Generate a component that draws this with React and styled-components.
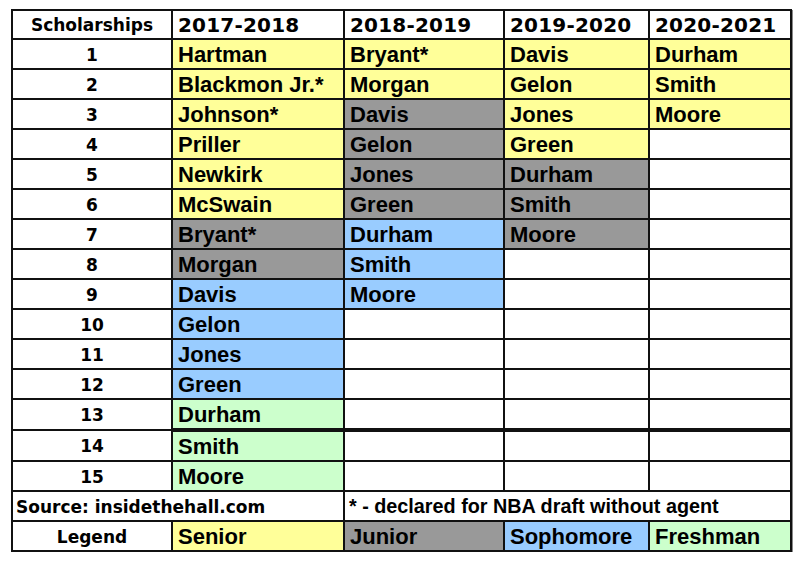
import React from 'react';
import styled, { createGlobalStyle } from 'styled-components';

const GlobalStyle = createGlobalStyle`
  body {
    margin: 0;
    background: #fff;
    font-family: "Liberation Sans", Arial, sans-serif;
  }
`;

const TONES = {
  S: '#ffff99',
  J: '#999999',
  So: '#99ccff',
  F: '#ccffcc',
};

const Page = styled.div`
  padding: 9px 0 0 11px;
`;

const Table = styled.table`
  border-collapse: collapse;
  table-layout: fixed;
  width: 779px;
  border: 2px solid #111;
  box-shadow: 1px 1px 0 #888;
`;

const Cell = styled.td`
  border: 2px solid #111;
  height: 28px;
  padding: 0 0 0 5px;
  white-space: nowrap;
  overflow: hidden;
  color: #000;
  background: ${p => (p.$tone ? TONES[p.$tone] : '#fff')};
  ${p => p.$thick && 'border-top: 4px solid #111;'}
`;

const HeadCell = styled(Cell)`
  font-family: "DejaVu Sans", Verdana, sans-serif;
  font-weight: bold;
  font-size: 20px;
  letter-spacing: 0.2px;
  padding-top: 1px;
  height: 26px;
`;

const LabelCell = styled(Cell)`
  font-family: "DejaVu Sans", Verdana, sans-serif;
  font-weight: bold;
  font-size: 17px;
  text-align: center;
  padding: 1px 0 0 0;
  height: ${p => (p.$head ? '26px' : '27px')};
`;

const NameCell = styled(Cell)`
  font-family: "Liberation Sans", Arial, sans-serif;
  font-weight: bold;
  font-size: 22px;
  padding-top: 2px;
  height: 26px;
`;

const SourceCell = styled(Cell)`
  font-family: "DejaVu Sans", Verdana, sans-serif;
  font-weight: bold;
  font-size: 17px;
  padding-left: 3px;
  padding-top: 1px;
  height: 27px;
`;

const NoteCell = styled(Cell)`
  font-family: "Liberation Sans", Arial, sans-serif;
  font-weight: bold;
  font-size: 19.8px;
  padding-left: 4px;
  padding-top: 1px;
  height: 27px;
`;

const seasons = ['2017-2018', '2018-2019', '2019-2020', '2020-2021'];

const roster = [
  [
    ['Hartman', 'S'], ['Blackmon Jr.*', 'S'], ['Johnson*', 'S'], ['Priller', 'S'],
    ['Newkirk', 'S'], ['McSwain', 'S'], ['Bryant*', 'J'], ['Morgan', 'J'],
    ['Davis', 'So'], ['Gelon', 'So'], ['Jones', 'So'], ['Green', 'So'],
    ['Durham', 'F'], ['Smith', 'F'], ['Moore', 'F'],
  ],
  [
    ['Bryant*', 'S'], ['Morgan', 'S'], ['Davis', 'J'], ['Gelon', 'J'],
    ['Jones', 'J'], ['Green', 'J'], ['Durham', 'So'], ['Smith', 'So'], ['Moore', 'So'],
  ],
  [
    ['Davis', 'S'], ['Gelon', 'S'], ['Jones', 'S'], ['Green', 'S'],
    ['Durham', 'J'], ['Smith', 'J'], ['Moore', 'J'],
  ],
  [['Durham', 'S'], ['Smith', 'S'], ['Moore', 'S']],
];

const legend = [
  ['Senior', 'S'],
  ['Junior', 'J'],
  ['Sophomore', 'So'],
  ['Freshman', 'F'],
];

const App = () => {
  const rows = Array.from({ length: 15 }, (_, i) => i);

  return (
    <Page>
      <GlobalStyle />
      <Table>
        <colgroup>
          <col style={{ width: 160 }} />
          <col style={{ width: 172 }} />
          <col style={{ width: 160 }} />
          <col style={{ width: 145 }} />
          <col style={{ width: 142 }} />
        </colgroup>
        <tbody>
          <tr>
            <LabelCell $head>Scholarships</LabelCell>
            {seasons.map(s => (
              <HeadCell key={s}>{s}</HeadCell>
            ))}
          </tr>
          {rows.map(i => (
            <tr key={i}>
              <LabelCell>{i + 1}</LabelCell>
              {roster.map((col, c) => {
                const entry = col[i];
                return (
                  <NameCell key={c} $tone={entry && entry[1]} $thick={i === 13}>
                    {entry ? entry[0] : ''}
                  </NameCell>
                );
              })}
            </tr>
          ))}
          <tr>
            <SourceCell colSpan={2}>Source: insidethehall.com</SourceCell>
            <NoteCell colSpan={3}>* - declared for NBA draft without agent</NoteCell>
          </tr>
          <tr>
            <LabelCell>Legend</LabelCell>
            {legend.map(([label, tone]) => (
              <NameCell key={label} $tone={tone}>{label}</NameCell>
            ))}
          </tr>
        </tbody>
      </Table>
    </Page>
  );
};

export default App;
